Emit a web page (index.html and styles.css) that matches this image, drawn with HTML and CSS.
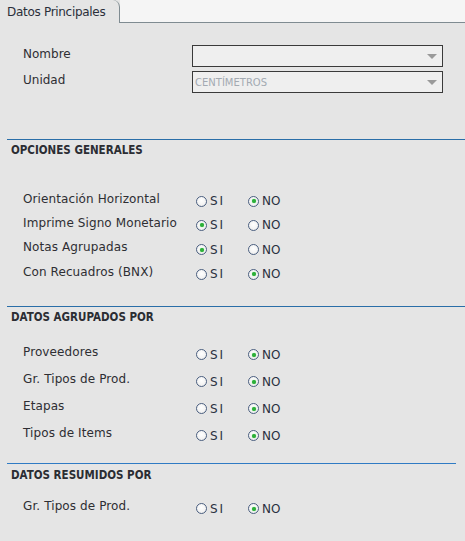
FILE: index.html
```html
<!DOCTYPE html>
<html lang="es">
<head>
<meta charset="utf-8">
<link rel="stylesheet" href="styles.css">
</head>
<body>
<div class="tabbar">
  <div class="tab">Datos Principales</div>
  <div class="tabfill"></div>
</div>
<div class="panel">
  <div class="fields">
    <div class="field">
      <span class="flabel">Nombre</span>
      <div class="select"><span class="sval"></span><span class="arrow"></span></div>
    </div>
    <div class="field">
      <span class="flabel">Unidad</span>
      <div class="select"><span class="sval">CENTÍMETROS</span><span class="arrow"></span></div>
    </div>
  </div>

  <section class="sec sec1">
    <h2 class="sec-title">OPCIONES GENERALES</h2>
    <div class="rows r24">
      <div class="row"><span class="rlabel">Orientación Horizontal</span><span class="opt si"><i class="radio"></i>SI</span><span class="opt"><i class="radio on"></i>NO</span></div>
      <div class="row"><span class="rlabel">Imprime Signo Monetario</span><span class="opt si"><i class="radio on"></i>SI</span><span class="opt"><i class="radio"></i>NO</span></div>
      <div class="row"><span class="rlabel">Notas Agrupadas</span><span class="opt si"><i class="radio on"></i>SI</span><span class="opt"><i class="radio"></i>NO</span></div>
      <div class="row"><span class="rlabel">Con Recuadros (BNX)</span><span class="opt si"><i class="radio"></i>SI</span><span class="opt"><i class="radio on"></i>NO</span></div>
    </div>
  </section>

  <section class="sec sec2">
    <h2 class="sec-title">DATOS AGRUPADOS POR</h2>
    <div class="rows r27">
      <div class="row"><span class="rlabel">Proveedores</span><span class="opt si"><i class="radio"></i>SI</span><span class="opt"><i class="radio on"></i>NO</span></div>
      <div class="row"><span class="rlabel">Gr. Tipos de Prod.</span><span class="opt si"><i class="radio"></i>SI</span><span class="opt"><i class="radio on"></i>NO</span></div>
      <div class="row"><span class="rlabel">Etapas</span><span class="opt si"><i class="radio"></i>SI</span><span class="opt"><i class="radio on"></i>NO</span></div>
      <div class="row"><span class="rlabel">Tipos de Items</span><span class="opt si"><i class="radio"></i>SI</span><span class="opt"><i class="radio on"></i>NO</span></div>
    </div>
  </section>

  <section class="sec sec3">
    <h2 class="sec-title">DATOS RESUMIDOS POR</h2>
    <div class="rows r27">
      <div class="row"><span class="rlabel">Gr. Tipos de Prod.</span><span class="opt si"><i class="radio"></i>SI</span><span class="opt"><i class="radio on"></i>NO</span></div>
    </div>
  </section>
</div>
</body>
</html>
```

FILE: styles.css
```css
html, body {
  margin: 0;
  padding: 0;
}
body {
  width: 465px;
  height: 541px;
  overflow: hidden;
  background: #e5e5e5;
  font-family: "DejaVu Sans", Tahoma, sans-serif;
  font-size: 12px;
  color: #2e2e33;
}
.tabbar {
  display: flex;
  height: 23px;
}
.tab {
  width: 120px;
  padding-left: 7px;
  line-height: 24px;
  height: 23px;
  box-sizing: border-box;
  border-right: 1px solid #7f8b91;
  border-top-right-radius: 7px;
  background: #e5e5e5;
  color: #2a2f3a;
  letter-spacing: -0.3px;
}
.tabfill {
  flex: 1;
  background: #f5f5f5;
  border-bottom: 1px solid #7f8b91;
}
.panel {
  padding-top: 22px;
}
.fields {
  display: flex;
  flex-direction: column;
  gap: 4px;
}
.field {
  display: flex;
  align-items: center;
  height: 22px;
}
.flabel {
  width: 169px;
  padding-left: 23px;
  margin-top: -4px;
}
.select {
  width: 251px;
  height: 22px;
  box-sizing: border-box;
  border: 1.5px solid #3a3a3a;
  background: #efefef;
  display: flex;
  align-items: center;
  justify-content: space-between;
  padding: 0 5px 0 2px;
}
.sval {
  font-size: 10px;
  color: #a3aab2;
}
.arrow {
  width: 0;
  height: 0;
  border-left: 5px solid transparent;
  border-right: 5px solid transparent;
  border-top: 5px solid #9a9a9a;
}
.sec {
  margin-left: 7px;
  border-top: 1px solid #2a6ea8;
}
.sec1 { margin-top: 46px; }
.sec2 { margin-top: 20px; }
.sec3 { margin-top: 14px; margin-right: 9px; border-top-color: #2f7bc4; }
.sec-title {
  margin: 0;
  padding: 2px 0 0 4px;
  height: 17px;
  font-size: 11.5px;
  font-weight: bold;
  font-family: "DejaVu Sans Condensed", "DejaVu Sans", sans-serif;
  color: #2b2d33;
  line-height: 17px;
}
.sec3 .sec-title { padding-top: 3px; height: 16px; }
.sec1 .rows { padding-top: 30px; }
.sec2 .rows { padding-top: 15px; }
.sec3 .rows { padding-top: 12px; }
.rows {
  display: flex;
  flex-direction: column;
}
.r24 .row { height: 24.3px; }
.r27 .row { height: 27px; }
.row {
  display: flex;
  align-items: center;
  padding-left: 16px;
}
.rlabel {
  width: 173px;
  margin-top: -5px;
  letter-spacing: 0.1px;
}
.opt {
  display: inline-flex;
  align-items: center;
  width: 52px;
  color: #2a3040;
}
.opt.si {
  letter-spacing: 2px;
}
.radio {
  display: inline-block;
  width: 9px;
  height: 9px;
  border: 1px solid #4b5f80;
  border-radius: 50%;
  background: radial-gradient(circle at 50% 40%, #ffffff 0%, #f3f3f3 60%, #dcdcdc 100%);
  margin-right: 3px;
  position: relative;
  box-sizing: content-box;
}
.radio.on::after {
  content: "";
  position: absolute;
  left: 2.5px;
  top: 2.5px;
  width: 4px;
  height: 4px;
  border-radius: 50%;
  background: #2dae3a;
  box-shadow: 0 0 1px #3ecf4a;
}
```
